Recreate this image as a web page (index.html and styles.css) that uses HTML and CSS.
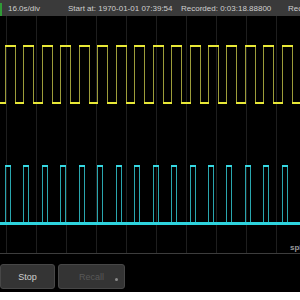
FILE: index.html
```html
<!DOCTYPE html>
<html>
<head>
<meta charset="utf-8">
<link rel="stylesheet" href="styles.css">
</head>
<body>
<div class="scope">
  <div class="bar">
    <span class="mark"></span>
    <span class="cell c1">16.0s/div</span>
    <span class="cell c2">Start at: 1970-01-01 07:39:54</span>
    <span class="cell c3">Recorded: 0:03:18.88800</span>
    <span class="cell c4">Recorded</span>
  </div>
  <div class="plot">
    <svg class="wave" width="300" height="237" viewBox="0 0 300 237" shape-rendering="crispEdges">
      <g class="grid">
        <path d="M6.5 0V237M36.5 0V237M66.5 0V237M96.5 0V237M126.5 0V237M156.5 0V237M186.5 0V237M216.5 0V237M246.5 0V237M276.5 0V237"/>
      </g>
      <path class="y-edge" d="M0 87H5.5V30H15.5V87H23.5V30H33.5V87H42.5V30H52.5V87H60.5V30H70.5V87H79.5V30H89.5V87H97.5V30H107.5V87H116.5V30H126.5V87H134.5V30H144.5V87H153.5V30H163.5V87H171.5V30H181.5V87H190.5V30H200.5V87H208.5V30H218.5V87H226.5V30H236.5V87H245.5V30H255.5V87H263.5V30H273.5V87H282.5V30H292.5V87H300"/>
      <path class="y-flat" d="M0 87H6M5 30H16M15 87H24M23 30H34M33 87H43M42 30H53M52 87H61M60 30H71M70 87H80M79 30H90M89 87H98M97 30H108M107 87H117M116 30H127M126 87H135M134 30H145M144 87H154M153 30H164M163 87H172M171 30H182M181 87H191M190 30H201M200 87H209M208 30H219M218 87H227M226 30H237M236 87H246M245 30H256M255 87H264M263 30H274M273 87H283M282 30H293M292 87H300"/>
      <path class="c-edge" d="M0 207H5.5V150H10.5V207H23.5V150H28.5V207H42.5V150H47.5V207H60.5V150H65.5V207H79.5V150H84.5V207H97.5V150H102.5V207H116.5V150H121.5V207H134.5V150H139.5V207H153.5V150H158.5V207H171.5V150H176.5V207H190.5V150H195.5V207H208.5V150H213.5V207H226.5V150H231.5V207H245.5V150H250.5V207H263.5V150H268.5V207H282.5V150H287.5V207H300"/>
      <path class="c-top" d="M5 150H11M23 150H29M42 150H48M60 150H66M79 150H85M97 150H103M116 150H122M134 150H140M153 150H159M171 150H177M190 150H196M208 150H214M226 150H232M245 150H251M263 150H269M282 150H288"/>
      <path class="c-low" d="M0 207.5H300"/>
    </svg>
    <span class="tag">splitter</span>
  </div>
  <div class="controls">
    <button class="btn">Stop</button>
    <button class="btn off">Recall<span class="dot"></span></button>
  </div>
</div>
</body>
</html>
```
FILE: styles.css
```css
html, body {
  margin: 0;
  padding: 0;
  background: #ffffff;
}
.scope {
  width: 300px;
  height: 292px;
  background: #000000;
  display: flex;
  flex-direction: column;
  overflow: hidden;
  font-family: "Liberation Sans", Arial, sans-serif;
}
.bar {
  height: 16px;
  flex: none;
  background: #3a3a3a;
  display: flex;
  align-items: center;
  color: #cfcfcf;
  font-size: 8px;
  white-space: nowrap;
  overflow: hidden;
  position: relative;
}
.mark {
  width: 2px;
  height: 13px;
  align-self: flex-end;
  background: #2f9a36;
  flex: none;
}
.cell { flex: none; }
.c1 { width: 60px; padding-left: 6px; }
.c2 { width: 113px; }
.c3 { width: 107px; }
.plot {
  height: 237px;
  flex: none;
  border-bottom: 1px solid #3d3d3d;
  position: relative;
}
.wave { display: block; }
.grid path { stroke: #1e1e1e; stroke-width: 1; fill: none; }
.y-edge { stroke: #9c9c3a; stroke-width: 1; fill: none; }
.y-flat { stroke: #e8e836; stroke-width: 2; fill: none; }
.c-edge { stroke: #2aa6ae; stroke-width: 1; fill: none; }
.c-top { stroke: #36d8e2; stroke-width: 2; fill: none; }
.c-low { stroke: #2ed4de; stroke-width: 3; fill: none; }
.tag {
  position: absolute;
  left: 290px;
  bottom: 1px;
  font-size: 8px;
  font-weight: bold;
  color: #9a9a9a;
  white-space: nowrap;
}
.controls {
  flex: none;
  display: flex;
  gap: 3px;
  padding-top: 10px;
}
.btn {
  height: 25px;
  margin: 0;
  padding: 0;
  border: 1px solid #474747;
  border-radius: 3px;
  background: #343434;
  color: #d0d0d0;
  font-family: "Liberation Sans", Arial, sans-serif;
  font-size: 9px;
  position: relative;
}
.btn:first-child { width: 55px; }
.btn.off {
  width: 67px;
  color: #585858;
}
.dot {
  position: absolute;
  right: 6px;
  top: 13px;
  width: 3px;
  height: 3px;
  border-radius: 50%;
  background: #8a8a8a;
}
```
